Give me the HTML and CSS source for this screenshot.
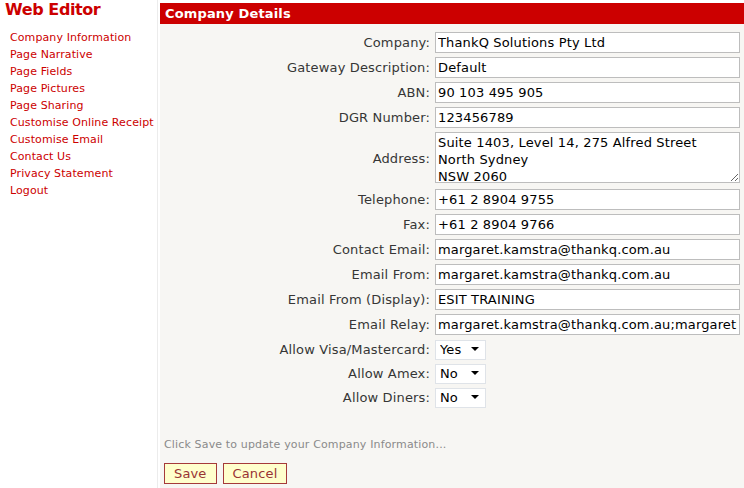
FILE: index.html
```html
<!DOCTYPE html>
<html>
<head>
    <meta name="viewport" content="width=device-width, initial-scale=1">
    <title>Web Editor - Company Information</title>
    <link rel="stylesheet" href="styles.css">
</head>
<body>
    <div class="page">
        <aside class="sidebar">
            <h1 class="title">Web Editor</h1>
            <ul class="menu">
                <li><a href="#">Company Information</a></li>
                <li><a href="#">Page Narrative</a></li>
                <li><a href="#">Page Fields</a></li>
                <li><a href="#">Page Pictures</a></li>
                <li><a href="#">Page Sharing</a></li>
                <li><a href="#">Customise Online Receipt</a></li>
                <li><a href="#">Customise Email</a></li>
                <li><a href="#">Contact Us</a></li>
                <li><a href="#">Privacy Statement</a></li>
                <li><a href="#">Logout</a></li>
            </ul>
        </aside>

        <main class="panel">
            <h2 class="panel-header">Company Details</h2>

            <form class="details">
                <label for="company">Company:</label>
                <input id="company" type="text" value="ThankQ Solutions Pty Ltd">

                <label for="gateway">Gateway Description:</label>
                <input id="gateway" type="text" value="Default">

                <label for="abn">ABN:</label>
                <input id="abn" type="text" value="90 103 495 905">

                <label for="dgr">DGR Number:</label>
                <input id="dgr" type="text" value="123456789">

                <label for="address">Address:</label>
                <textarea id="address" rows="3">Suite 1403, Level 14, 275 Alfred Street
North Sydney
NSW 2060</textarea>

                <label for="phone">Telephone:</label>
                <input id="phone" type="text" value="+61 2 8904 9755">

                <label for="fax">Fax:</label>
                <input id="fax" type="text" value="+61 2 8904 9766">

                <label for="contact-email">Contact Email:</label>
                <input id="contact-email" type="text" value="margaret.kamstra@thankq.com.au">

                <label for="email-from">Email From:</label>
                <input id="email-from" type="text" value="margaret.kamstra@thankq.com.au">

                <label for="email-display">Email From (Display):</label>
                <input id="email-display" type="text" value="ESIT TRAINING">

                <label for="email-relay">Email Relay:</label>
                <input id="email-relay" type="text" value="margaret.kamstra@thankq.com.au;margaretk">

                <label for="visa" class="select-label">Allow Visa/Mastercard:</label>
                <span class="select-wrap">
                    <select id="visa"><option>Yes</option><option>No</option></select>
                </span>

                <label for="amex" class="select-label">Allow Amex:</label>
                <span class="select-wrap">
                    <select id="amex"><option>No</option><option>Yes</option></select>
                </span>

                <label for="diners" class="select-label">Allow Diners:</label>
                <span class="select-wrap">
                    <select id="diners"><option>No</option><option>Yes</option></select>
                </span>
            </form>

            <p class="hint">Click Save to update your Company Information...</p>

            <div class="actions">
                <button type="button" class="btn">Save</button>
                <button type="button" class="btn">Cancel</button>
            </div>
        </main>
    </div>
</body>
</html>
```

FILE: styles.css
```css
:root {
    font-family: "DejaVu Sans", Verdana, sans-serif;
    letter-spacing: 0.15px;
}
html, body {
    height: 100%;
    margin: 0;
}
body {
    background: #fff;
}

.page {
    display: flex;
    height: 100%;
}

.sidebar {
    width: 157px;
    flex: none;
    border-right: 1px solid #ececec;
}

.title {
    margin: 0;
    padding: 0 0 0 5px;
    font-size: 16px;
    line-height: 19px;
    font-weight: bold;
    color: #cc0000;
    letter-spacing: -0.4px;
}

.menu {
    list-style: none;
    margin: 10px 0 0;
    padding: 0 0 0 10px;
}

.menu li {
    font-size: 11px;
    line-height: 17px;
    letter-spacing: 0.1px;
}

.menu a {
    color: #cc0000;
    text-decoration: none;
}

.panel {
    flex: 1;
    margin: 3px 0 0 2px;
    background: #f7f6f3;
}

.panel-header {
    margin: 0;
    padding: 0 5px;
    height: 21px;
    line-height: 21px;
    background: #cc0000;
    color: #fff;
    font-size: 13px;
    font-weight: bold;
}

.details {
    display: grid;
    grid-template-columns: 1fr 305px;
    column-gap: 5px;
    row-gap: 4px;
    padding: 8px 4px 0;
    align-items: center;
}

.details label {
    text-align: right;
    font-size: 13px;
    color: #363636;
    white-space: nowrap;
}

.details input,
.details textarea {
    box-sizing: border-box;
    width: 305px;
    margin: 0;
    border: 1px solid #bdbdbd;
    background: #fff;
    color: #000;
    font-family: inherit;
    font-size: 13px;
    letter-spacing: 0.15px;
    padding: 0 2px;
    outline: none;
}

.details input {
    height: 21px;
}

.details textarea {
    height: 51px;
    line-height: 17px;
    padding-top: 1px;
    resize: both;
    overflow: hidden;
    margin-bottom: 2px;
}

.select-wrap {
    position: relative;
    display: inline-block;
    width: 51px;
    height: 20px;
}

.select-wrap select {
    -webkit-appearance: none;
    appearance: none;
    box-sizing: border-box;
    width: 51px;
    height: 20px;
    margin: 0;
    padding: 0 0 0 4px;
    border: 1px solid #dfe3e8;
    background: #fff;
    color: #000;
    font-family: inherit;
    font-size: 13px;
    letter-spacing: 0.15px;
}

.select-wrap::after {
    content: "";
    position: absolute;
    right: 7px;
    top: 8px;
    border-left: 4px solid transparent;
    border-right: 4px solid transparent;
    border-top: 4px solid #000;
    pointer-events: none;
}

.hint {
    margin: 31px 0 0;
    padding: 0 4px;
    font-size: 11px;
    color: #8a8a8a;
}

.actions {
    display: flex;
    gap: 6px;
    padding: 12px 4px 0;
}

.btn {
    height: 21px;
    padding: 0 9px;
    border: 1px solid #a53a3a;
    background: #ffffcc;
    color: #993333;
    font-family: inherit;
    font-size: 13px;
    letter-spacing: 0.15px;
    line-height: 19px;
}
```
